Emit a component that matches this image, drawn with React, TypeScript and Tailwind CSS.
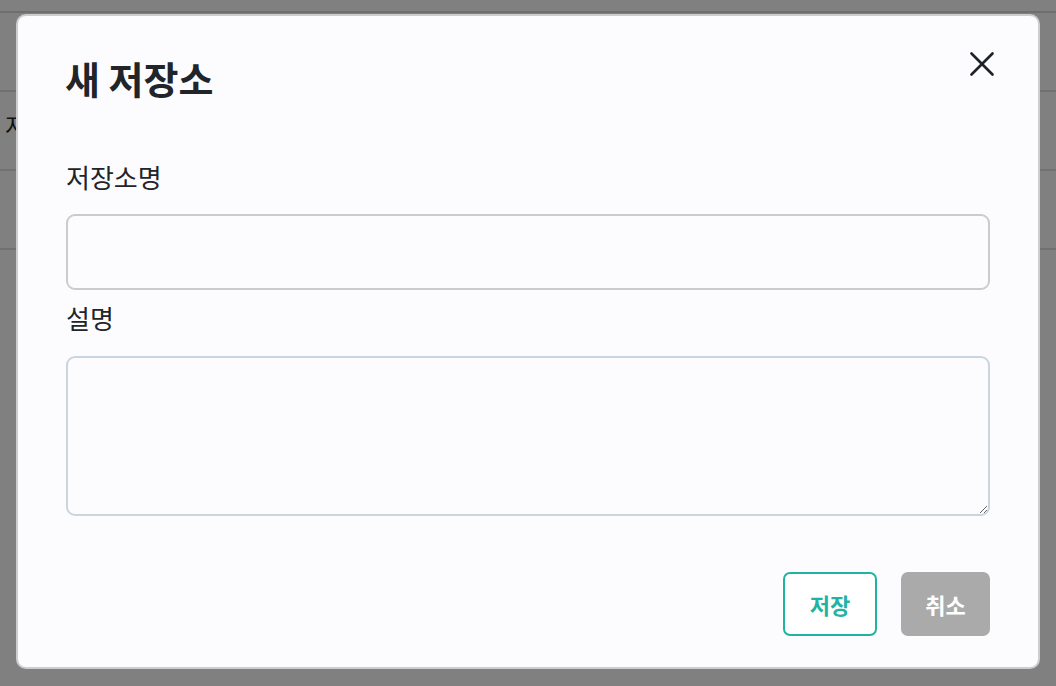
import React from "react";

export default function App() {
  const font = { fontFamily: '"Noto Sans CJK KR", "Noto Sans", sans-serif' };
  return (
    <div className="relative w-full h-[686px] overflow-hidden bg-[#808080]" style={font}>
      {/* dimmed background page */}
      <div className="flex flex-col">
        <div className="h-[13px] border-b-2 border-[#6e6e6e]" />
        <div className="h-[79px] border-b-2 border-[#717171]" />
        <div className="h-[79px] border-b-2 border-[#717171] flex items-center pl-[5px] pb-[12px] text-[24px] text-[#111]">저장소</div>
        <div className="h-[79px] border-b-2 border-[#717171]" />
      </div>

      {/* modal */}
      <div className="absolute left-[16px] top-[14px] w-[1024px] h-[655px] rounded-[10px] border-2 border-[#cdcdcd] bg-[#fcfcfe] flex flex-col px-[48px] pt-[36px] pb-[31px] text-[#212529]">
        <div className="flex items-start justify-between">
          <h1 className="text-[38px] leading-[52px] font-semibold -ml-[1px]">새 저장소</h1>
          <button className="mt-[0px] -mr-[4px] w-[24px] h-[24px]">
            <svg width="24" height="24" viewBox="0 0 24 24" fill="none" stroke="#1f2328" strokeWidth="2.6" strokeLinecap="round">
              <line x1="1.5" y1="1.5" x2="22.5" y2="22.5" />
              <line x1="22.5" y1="1.5" x2="1.5" y2="22.5" />
            </svg>
          </button>
        </div>

        <label className="mt-[55px] text-[26px] leading-[36px]">저장소명</label>
        <input className="mt-[19px] h-[76px] w-full rounded-[9px] border-2 border-[#cbcbcb] bg-[#fcfcfe] outline-none" />

        <label className="mt-[10px] text-[26px] leading-[36px]">설명</label>
        <textarea className="mt-[20px] h-[160px] w-full rounded-[9px] border-2 border-[#cad5df] bg-[#fcfcfe] outline-none" />

        <div className="mt-auto flex justify-end gap-[24px]">
          <button className="w-[94px] h-[64px] rounded-[7px] border-2 border-[#1fb3a3] bg-white text-[#1fb3a3] text-[22px] font-bold">저장</button>
          <button className="w-[89px] h-[64px] rounded-[7px] bg-[#aaaaaa] text-white text-[22px] font-bold">취소</button>
        </div>
      </div>
    </div>
  );
}
